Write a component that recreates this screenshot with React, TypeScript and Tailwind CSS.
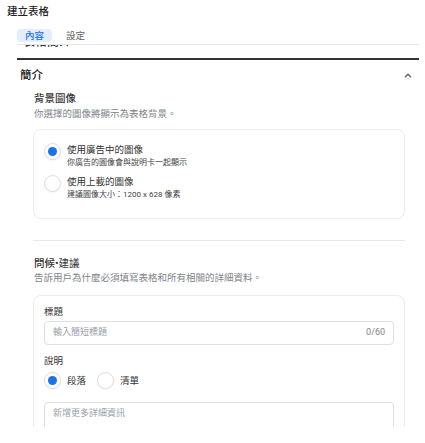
import React from 'react';

function Radio({ checked }: { checked?: boolean }) {
    return (
        <span className="w-[17px] h-[17px] shrink-0 rounded-full border border-[#dcdcdc] bg-white flex items-center justify-center shadow-[0_1px_1px_rgba(0,0,0,0.04)]">
            {checked && <span className="w-[9px] h-[9px] rounded-full bg-[#1a73e8]"></span>}
        </span>
    );
}

export default function App() {
    return (
        <main className="w-[425px] h-[443px] bg-white text-[#202124] font-['Roboto','Noto_Sans_CJK_TC',sans-serif]">
            <div className="h-[427px] overflow-hidden">
                <div className="h-[22px] pl-[7px] pt-[5px] text-[10.5px] leading-[14px] font-medium">建立表格</div>

                <div className="ml-[17px] mr-[6px]">
                    {/* Tabs */}
                    <div className="h-[23px] flex items-end gap-[6px] pb-[2px] border-b border-[#e6e6e6]">
                        <span className="h-[13px] px-[8px] rounded-[4px] bg-[#e3edfd] text-[#1a73e8] text-[9.5px] leading-[13px] font-medium">內容</span>
                        <span className="h-[13px] px-[8px] text-[#5f6368] text-[9.5px] leading-[13px]">設定</span>
                    </div>

                    {/* scrolled-away section header peeking out */}
                    <div className="h-[15px] overflow-hidden border-b-2 border-[#333]">
                        <div className="pl-[6px] -mt-[10px] text-[12px] leading-[14px] font-medium text-[#333]">表格簡介</div>
                    </div>

                    <div className="h-[30px] flex items-center justify-between pl-[3px] pr-[7px]">
                        <span className="text-[11.5px] leading-[14px] font-medium">簡介</span>
                        <svg width="8" height="5" viewBox="0 0 8 5" fill="none">
                            <path d="M1 4.2 4 1.2 7 4.2" stroke="#6b6b6b" strokeWidth="1.5" />
                        </svg>
                    </div>

                    <div className="ml-[16px] mr-[14px]">
                        {/* 背景圖像 */}
                        <div className="pl-[1px] mt-[2px] text-[10.5px] leading-[14px] font-medium text-[#333]">背景圖像</div>
                        <div className="pl-[1px] mt-[1px] text-[9.5px] leading-[13px] text-[#80868b]">你選擇的圖像將顯示為表格背景。</div>

                        <div className="mt-[9px] rounded-[8px] border border-[#ececec] pl-[10px] pt-[13px] pb-[17px] flex flex-col gap-[6px]">
                            <div className="flex gap-[6px]">
                                <Radio checked />
                                <div>
                                    <div className="text-[9.5px] leading-[13px] text-[#333]">使用廣告中的圖像</div>
                                    <div className="text-[8px] leading-[13px] text-[#444]">你廣告的圖像會與說明卡一起顯示</div>
                                </div>
                            </div>
                            <div className="flex gap-[6px]">
                                <Radio />
                                <div>
                                    <div className="text-[9.5px] leading-[13px] text-[#333]">使用上載的圖像</div>
                                    <div className="text-[8px] leading-[13px] text-[#444]">建議圖像大小：1200 x 628 像素</div>
                                </div>
                            </div>
                        </div>

                        <div className="mt-[21px] h-px bg-[#e8e8e8]"></div>

                        {/* 問候•建議 */}
                        <div className="pl-[1px] mt-[16px] text-[10.5px] leading-[14px] font-medium text-[#333]">
                            問候<span className="font-normal">•建議</span>
                        </div>
                        <div className="pl-[1px] text-[9.5px] leading-[13px] text-[#80868b]">告訴用戶為什麼必須填寫表格和所有相關的詳細資料。</div>

                        <div className="mt-[11px] rounded-[8px] border border-[#ececec] px-[10px] pt-[9px] pb-[20px]">
                            <div className="text-[9.5px] leading-[13px] text-[#333]">標題</div>
                            <div className="mt-[3px] h-[24px] rounded-[4px] border border-[#e0e0e0] px-[8px] flex items-center justify-between text-[9px]">
                                <span className="text-[#9aa0a6]">輸入簡短標題</span>
                                <span className="text-[#80868b]">0/60</span>
                            </div>

                            <div className="mt-[9px] text-[9.5px] leading-[13px] text-[#333]">說明</div>
                            <div className="mt-[5px] flex items-center">
                                <Radio checked />
                                <span className="ml-[6px] text-[9.5px] leading-[13px] text-[#333]">段落</span>
                                <span className="ml-[11px]"><Radio /></span>
                                <span className="ml-[6px] text-[9.5px] leading-[13px] text-[#333]">清單</span>
                            </div>

                            <div className="mt-[13px] h-[60px] rounded-[4px] border border-[#e0e0e0] px-[8px] pt-[4px] text-[9px] leading-[13px] text-[#9aa0a6]">
                                新增更多詳細資訊
                            </div>
                        </div>
                    </div>
                </div>
            </div>
        </main>
    );
}
